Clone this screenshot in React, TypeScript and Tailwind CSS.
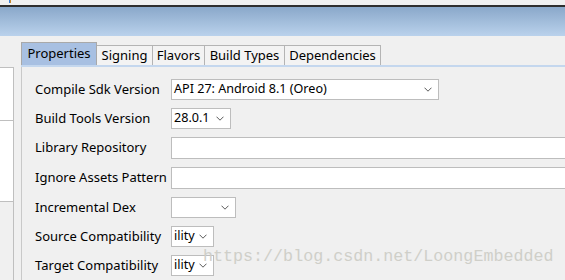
import React from 'react';

const font = { fontFamily: '"Noto Sans", "Open Sans", sans-serif' };

function Chevron() {
  return (
    <svg width="8" height="5" viewBox="0 0 8 5" className="shrink-0">
      <path d="M0.5 0.7 L4 4.2 L7.5 0.7" fill="none" stroke="#5a5a5a" strokeWidth="1" />
    </svg>
  );
}

function Combo({ value, width, height = 21 }: { value: string; width: number; height?: number }) {
  return (
    <div
      className="flex items-center justify-between border border-[#bdbdbd] bg-white pl-[2px] pr-[6px] text-[12.6px] text-black"
      style={{ width, height }}
    >
      <span className="whitespace-nowrap leading-none">{value}</span>
      <Chevron />
    </div>
  );
}

function Field({ height = 22 }: { height?: number }) {
  return <div className="flex-1 border border-r-0 border-[#bdbdbd] bg-white" style={{ height }} />;
}

const tabs = [
  { name: 'Properties', w: 76 },
  { name: 'Signing', w: 56 },
  { name: 'Flavors', w: 52 },
  { name: 'Build Types', w: 80 },
  { name: 'Dependencies', w: 96 },
];

const rows: { label: string; h: number; control: React.ReactNode }[] = [
  { label: 'Compile Sdk Version', h: 29, control: <Combo value="API 27: Android 8.1 (Oreo)" width={268} /> },
  { label: 'Build Tools Version', h: 29, control: <Combo value="28.0.1" width={60} /> },
  { label: 'Library Repository', h: 30, control: <Field /> },
  { label: 'Ignore Assets Pattern', h: 30, control: <Field /> },
  { label: 'Incremental Dex', h: 29, control: <Combo value="" width={65} /> },
  { label: 'Source Compatibility', h: 29, control: <Combo value="ility" width={43} /> },
  { label: 'Target Compatibility', h: 29, control: <Combo value="ility" width={43} /> },
];

export default function App() {
  return (
    <div className="relative h-[280px] w-[565px] overflow-hidden bg-[#f0f0f0]" style={font}>
      {/* window chrome */}
      <div className="relative h-[5px] bg-[#f0f0f0]">
        <span className="absolute left-[9px] top-0 h-[3px] w-[1px] bg-[#3b7fd4]" />
        <span className="absolute left-[10px] top-0 h-[3px] w-[1px] bg-[#c98a2e]" />
      </div>
      <div className="h-[2px] bg-[#2e2e2e]" />
      <div className="h-[29px] bg-gradient-to-b from-[#8aa8ca] to-[#bad2ec]" />

      <div className="flex">
        {/* left pane */}
        <div className="flex w-[21px] flex-col">
          <div className="h-[31px]" />
          <div className="flex w-[14px] flex-col border-r border-t border-[#bfbfbf]">
            <div className="h-[53px] border-b border-[#bfbfbf] bg-white" />
            <div className="h-[81px] border-b border-[#bfbfbf] bg-white" />
            <div className="h-[80px]" />
          </div>
        </div>

        {/* tab pane */}
        <div className="flex flex-1 flex-col">
          <div className="flex h-[29px] items-end pt-[5px]">
            {tabs.map((t, i) => (
              <div
                key={t.name}
                className={
                  i === 0
                    ? 'flex h-[23px] items-center justify-center border border-b-0 border-[#a9a9a9] bg-[#a8c0e2] text-[13px] text-black'
                    : 'flex h-[20px] items-center justify-center border border-b-0 border-l-0 border-[#b4b4b4] bg-[#f3f3f3] text-[13px] text-black'
                }
                style={{ width: t.w }}
              >
                {t.name}
              </div>
            ))}
          </div>
          <div className="h-[2px] bg-[#c4d7ee]" />
          <div className="flex flex-col border-l border-[#c9c9c9] pl-[13px] pt-[12px]">
            {rows.map((r) => (
              <div key={r.label} className="flex items-start" style={{ height: r.h }}>
                <div className="flex h-[21px] w-[136px] items-center text-[13px] text-black">{r.label}</div>
                {r.control}
              </div>
            ))}
          </div>
        </div>
      </div>

      {/* watermark */}
      <div
        className="pointer-events-none absolute left-[203px] top-[249px] text-[16.7px] leading-none text-[#cfcfc9]"
        style={{ fontFamily: '"Liberation Mono", monospace' }}
      >
        https://blog.csdn.net/LoongEmbedded
      </div>
    </div>
  );
}
